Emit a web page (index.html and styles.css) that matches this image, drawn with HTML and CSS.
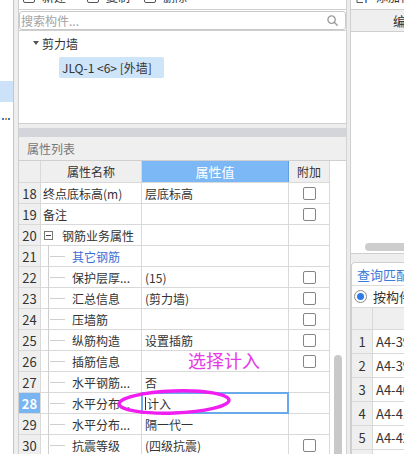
FILE: index.html
```html
<!DOCTYPE html>
<html>
<head>
<meta charset="utf-8">
<link rel="stylesheet" href="styles.css">
</head>
<body>
<div class="screen">
  <div class="strip">
    <div class="strip-sel"></div>
    <div class="strip-dots"><i class="dot blue"></i><i class="dot orange"></i><i class="dot blue"></i></div>
  </div>
  <div class="gutter"></div>
  <div class="main">
    <div class="toolbar">
      <span class="tb-item w1"><span class="tb-icon"></span>新建</span>
      <span class="tb-item w2"><span class="tb-icon"></span>复制</span>
      <span class="tb-item"><span class="tb-icon del"><span class="del-mark"></span></span>删除</span>
    </div>
    <div class="search">
      <span class="ph">搜索构件...</span>
      <svg class="mag" width="11" height="11" viewBox="0 0 11 11"><circle cx="4.6" cy="4.6" r="3.7" fill="none" stroke="#9a9a9a" stroke-width="1.3"/><line x1="7.3" y1="7.3" x2="10.2" y2="10.2" stroke="#9a9a9a" stroke-width="1.4" stroke-linecap="round"/></svg>
    </div>
    <div class="tree">
      <div class="tree-root"><span class="caret"></span>剪力墙</div>
      <div class="tree-leaf">JLQ-1 &lt;6&gt; [外墙]</div>
    </div>
    <div class="gap"></div>
    <div class="titlebar"></div>
    <div class="prop-head">属性列表</div>
    <div class="prop-body">
      <div class="grid">
        <div class="row head"><div class="c num"></div><div class="c name">属性名称</div><div class="c val">属性值</div><div class="c add">附加</div></div>
        <div class="row"><div class="c num">18</div><div class="c name">终点底标高(m)</div><div class="c val">层底标高</div><div class="c add"><span class="cb"></span></div></div>
        <div class="row"><div class="c num">19</div><div class="c name">备注</div><div class="c val"></div><div class="c add"><span class="cb"></span></div></div>
        <div class="row"><div class="c num">20</div><div class="c name"><span class="minus"></span>钢筋业务属性</div><div class="c val"></div><div class="c add"></div></div>
        <div class="row"><div class="c num">21</div><div class="c name sub link">其它钢筋</div><div class="c val"></div><div class="c add"></div></div>
        <div class="row"><div class="c num">22</div><div class="c name sub">保护层厚...</div><div class="c val">(15)</div><div class="c add"><span class="cb"></span></div></div>
        <div class="row"><div class="c num">23</div><div class="c name sub">汇总信息</div><div class="c val">(剪力墙)</div><div class="c add"><span class="cb"></span></div></div>
        <div class="row"><div class="c num">24</div><div class="c name sub">压墙筋</div><div class="c val"></div><div class="c add"><span class="cb"></span></div></div>
        <div class="row"><div class="c num">25</div><div class="c name sub">纵筋构造</div><div class="c val">设置插筋</div><div class="c add"><span class="cb"></span></div></div>
        <div class="row"><div class="c num">26</div><div class="c name sub">插筋信息</div><div class="c val"></div><div class="c add"><span class="cb"></span></div></div>
        <div class="row"><div class="c num">27</div><div class="c name sub">水平钢筋...</div><div class="c val">否</div><div class="c add"></div></div>
        <div class="row"><div class="c num sel">28</div><div class="c name sub">水平分布...</div><div class="c val editing"><span class="caret-line"></span>计入</div><div class="c add"></div></div>
        <div class="row"><div class="c num">29</div><div class="c name sub">水平分布...</div><div class="c val">隔一代一</div><div class="c add"></div></div>
        <div class="row"><div class="c num">30</div><div class="c name sub">抗震等级</div><div class="c val">(四级抗震)</div><div class="c add"><span class="cb"></span></div></div>
      </div>
      <div class="vscroll"><div class="vthumb"></div></div>
    </div>
  </div>
  <div class="divider"></div>
  <div class="right">
    <div class="r-toolbar">
      <span class="r-tb-item"><svg width="16" height="14" viewBox="0 0 16 14"><path d="M1 1 V12.5 H7" fill="none" stroke="#555" stroke-width="1"/><path d="M10 4 V13 M5.5 8.5 H14.5" stroke="#2a7de1" stroke-width="1.6"/></svg>添加构件</span>
    </div>
    <div class="r-head">编辑</div>
    <div class="r-body"><div class="hthumb"></div></div>
    <div class="r-gap"></div>
    <div class="r-panel">
      <div class="r-tab">查询匹配清单</div>
      <div class="r-radio"><span class="radio"><span class="radio-dot"></span></span>按构件类型</div>
      <div class="r-row r-headrow"><div class="rc rnum"></div><div class="rc rtxt"></div></div>
      <div class="r-row"><div class="rc rnum">1</div><div class="rc rtxt">A4-39</div></div>
      <div class="r-row"><div class="rc rnum">2</div><div class="rc rtxt">A4-39</div></div>
      <div class="r-row"><div class="rc rnum">3</div><div class="rc rtxt">A4-40</div></div>
      <div class="r-row"><div class="rc rnum">4</div><div class="rc rtxt">A4-41</div></div>
      <div class="r-row"><div class="rc rnum">5</div><div class="rc rtxt">A4-42</div></div>
      <div class="r-row"><div class="rc rnum"></div><div class="rc rtxt"></div></div>
    </div>
  </div>
  <div class="note">选择计入</div>
  <svg class="ellipse" width="124" height="34" viewBox="0 0 124 34"><ellipse cx="62" cy="17" rx="55" ry="11" fill="none" stroke="#f01ef0" stroke-width="3.4" transform="rotate(-2 62 17)"/></svg>
</div>
</body>
</html>
```

FILE: styles.css
```css
* { box-sizing: border-box; }
html, body { margin: 0; padding: 0; }
body {
  width: 404px;
  height: 454px;
  overflow: hidden;
  background: #fff;
  font-family: "Noto Sans CJK SC", "Noto Sans", sans-serif;
  font-size: 12px;
  color: #333;
}
.screen {
  position: relative;
  display: flex;
  width: 404px;
  height: 454px;
  overflow: hidden;
}

/* far-left strip */
.strip {
  width: 14px;
  flex: none;
  border-right: 1px solid #c6c6c6;
  display: flex;
  flex-direction: column;
}
.strip-sel { margin-top: 81px; height: 21px; background: #cce2f8; }
.strip-dots { margin-top: 16px; display: flex; gap: 1px; padding-left: 2px; }
.dot { display: block; width: 2px; height: 2px; }
.dot.blue { background: #3b78c8; }
.dot.orange { background: #e0902a; }

.gutter {
  width: 5px;
  flex: none;
  background: #eeeeee;
  border-right: 1px solid #cfcfcf;
}

/* main column */
.main {
  width: 327px;
  flex: none;
  display: flex;
  flex-direction: column;
}
.toolbar {
  height: 10px;
  flex: none;
  border-bottom: 1px solid #cfcfcf;
  display: flex;
  padding-left: 4px;
  overflow: hidden;
}
.tb-item {
  display: flex;
  align-items: flex-end;
  gap: 7px;
  height: 14px;
  line-height: 14px;
  margin-top: -10px;
  white-space: nowrap;
}
.tb-item.w1 { width: 64px; }
.tb-item.w2 { width: 57px; }
.tb-icon {
  width: 12px;
  height: 12px;
  border: 1px solid #555;
  border-radius: 2px;
  margin-bottom: 1px;
  position: relative;
}
.del-mark {
  position: absolute;
  left: 3px;
  bottom: 2px;
  width: 4px;
  height: 4px;
  background: #e02020;
}
.search {
  margin-top: 1px;
  height: 19px;
  flex: none;
  border: 1px solid #c9c9c9;
  border-radius: 3px;
  display: flex;
  align-items: center;
  justify-content: space-between;
  padding: 0 7px 0 1px;
}
.ph { color: #a3a3a3; }
.mag { display: block; }

.tree {
  height: 94px;
  flex: none;
  border-top: 1px solid #cfcfcf;
  border-bottom: 1px solid #cfcfcf;
  padding-top: 2px;
}
.tree-root {
  height: 20px;
  display: flex;
  align-items: center;
  gap: 3px;
  padding-left: 14px;
}
.caret {
  width: 0;
  height: 0;
  border-left: 3px solid transparent;
  border-right: 3px solid transparent;
  border-top: 4px solid #555;
}
.tree-leaf {
  margin-top: 4px;
  margin-left: 40px;
  width: 105px;
  height: 21px;
  background: #cde4f9;
  border-radius: 2px;
  padding-left: 3px;
  display: flex;
  align-items: center;
  white-space: nowrap;
}
.gap { height: 4px; flex: none; background: #eeeeee; }
.titlebar { height: 9px; flex: none; background: #d4d5da; }
.prop-head {
  height: 24px;
  flex: none;
  background: #efefef;
  border-bottom: 1px solid #cfcfcf;
  padding-left: 8px;
  color: #777;
  display: flex;
  align-items: center;
}
.prop-body {
  flex: 1;
  min-height: 0;
  display: flex;
}
.grid { width: 311px; flex: none; }
.row {
  display: grid;
  grid-template-columns: 22px 101px 147px 41px;
  height: 21px;
  border-bottom: 1px solid #d9d9d9;
}
.row.head { height: 22px; }
.c {
  border-right: 1px solid #d9d9d9;
  display: flex;
  align-items: center;
  white-space: nowrap;
  overflow: hidden;
  position: relative;
}
.num { justify-content: center; background: #efefef; font-size: 13px; }
.num.sel { background: #79b5f2; color: #fff; font-weight: bold; }
.name { padding-left: 2px; }
.val { padding-left: 3px; }
.add { justify-content: center; }
.head .c { justify-content: center; background: #efefef; padding: 0; }
.head .val { background: #7bb8f5; color: #fff; border-right-color: #5f9fe0; font-size: 13px; }
.cb {
  width: 13px;
  height: 13px;
  border: 1px solid #858585;
  border-radius: 2px;
  background: #fff;
}
.minus {
  width: 9px;
  height: 9px;
  border: 1px solid #777;
  margin-left: 1px;
  margin-right: 9px;
  position: relative;
}
.minus::after {
  content: "";
  position: absolute;
  left: 1px;
  right: 1px;
  top: 3px;
  height: 1px;
  background: #444;
}
.sub { padding-left: 31px; overflow: visible; }
.sub::before {
  content: "";
  position: absolute;
  left: 7px;
  top: -1px;
  bottom: -1px;
  width: 1px;
  background: #cfcfcf;
}
.sub::after {
  content: "";
  position: absolute;
  left: 9px;
  width: 15px;
  top: 10px;
  height: 1px;
  background: #cfcfcf;
}
.link { color: #3b6fd6; }
.editing { overflow: visible; }
.editing::after {
  content: "";
  position: absolute;
  left: -1px;
  right: -1px;
  top: -1px;
  bottom: -1px;
  border: 2px solid #6aa9ea;
}
.caret-line { width: 1px; height: 13px; background: #333; margin-right: 1px; }

.vscroll {
  width: 16px;
  flex: none;
  padding-top: 194px;
  padding-left: 4px;
}
.vthumb {
  width: 8px;
  height: 120px;
  border-radius: 4px;
  background: #c9c9c9;
}

.divider {
  width: 5px;
  flex: none;
  background: #ececec;
  border-left: 1px solid #d2d2d2;
  border-right: 1px solid #cfcfcf;
}

/* right column */
.right {
  width: 53px;
  flex: none;
  display: flex;
  flex-direction: column;
  overflow: hidden;
}
.r-toolbar {
  height: 10px;
  flex: none;
  border-bottom: 1px solid #cfcfcf;
  padding-left: 5px;
  overflow: hidden;
  display: flex;
}
.r-tb-item {
  display: flex;
  align-items: flex-end;
  gap: 4px;
  height: 14px;
  line-height: 14px;
  margin-top: -10px;
  white-space: nowrap;
}
.r-tb-item svg { display: block; }
.r-head {
  height: 22px;
  flex: none;
  background: #efefef;
  border-bottom: 1px solid #cfcfcf;
  padding-left: 42px;
  display: flex;
  align-items: center;
  white-space: nowrap;
  font-size: 13px;
}
.r-body {
  height: 222px;
  flex: none;
  border-bottom: 1px solid #cfcfcf;
  padding-top: 211px;
  padding-left: 14px;
}
.hthumb {
  width: 60px;
  height: 8px;
  border-radius: 4px;
  background: #cdcdcd;
}
.r-gap { height: 8px; flex: none; background: #eeeeee; }
.r-panel {
  flex: 1;
  border-top: 1px solid #cfcfcf;
  border-left: 1px solid #cfcfcf;
  border-top-left-radius: 4px;
}
.r-tab {
  height: 22px;
  padding-left: 5px;
  display: flex;
  align-items: center;
  white-space: nowrap;
  color: #3b7bd8;
  font-size: 13px;
}
.r-radio {
  height: 22px;
  border-top: 1px solid #dcdcdc;
  display: flex;
  align-items: center;
  gap: 6px;
  padding-left: 2px;
  white-space: nowrap;
  font-size: 13px;
}
.radio {
  width: 13px;
  height: 13px;
  border: 1px solid #8a8a8a;
  border-radius: 50%;
  display: flex;
  align-items: center;
  justify-content: center;
  flex: none;
}
.radio-dot { width: 7px; height: 7px; border-radius: 50%; background: #2f7ae6; }
.r-row {
  display: flex;
  height: 24px;
  border-bottom: 1px solid #d9d9d9;
}
.r-headrow { height: 23px; background: #efefef; border-top: 1px solid #dcdcdc; }
.rc { display: flex; align-items: center; white-space: nowrap; overflow: hidden; }
.rnum {
  width: 21px;
  flex: none;
  justify-content: center;
  background: #efefef;
  border-right: 1px solid #d9d9d9;
  font-size: 13px;
}
.rtxt { padding-left: 3px; font-size: 13px; }

/* annotations drawn over the screenshot */
.note {
  position: absolute;
  left: 188px;
  top: 348px;
  font-size: 18px;
  line-height: 24px;
  color: #e63ae6;
  white-space: nowrap;
}
.ellipse {
  position: absolute;
  left: 112px;
  top: 385px;
}
```
